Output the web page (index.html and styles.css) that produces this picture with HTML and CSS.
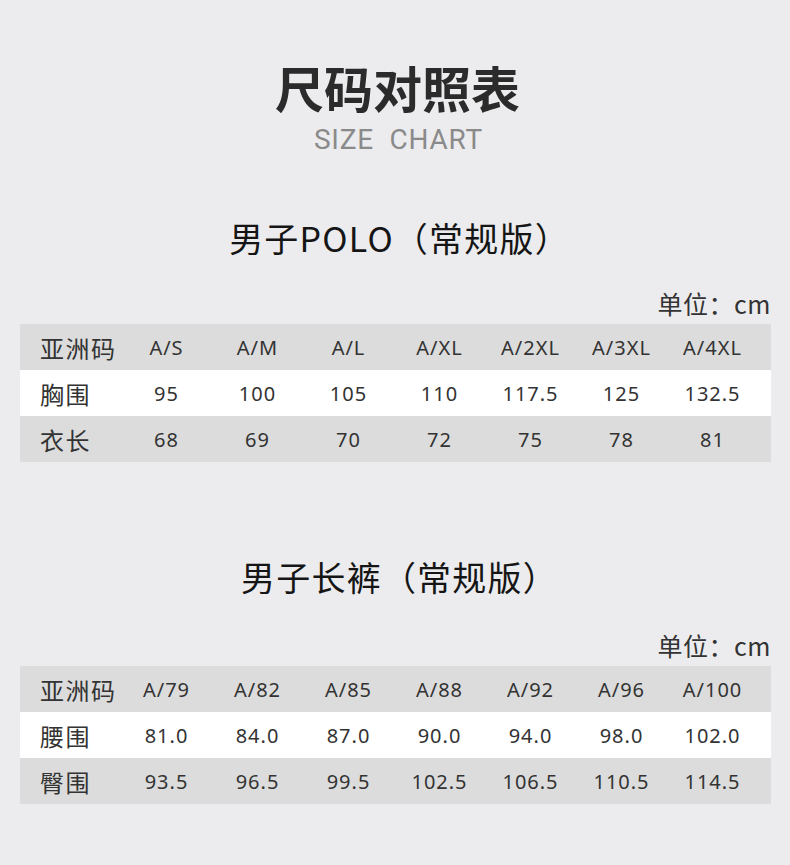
FILE: index.html
```html
<!DOCTYPE html>
<html lang="zh">
<head>
<meta charset="utf-8">
<title>尺码对照表</title>
<link rel="stylesheet" href="styles.css">
</head>
<body>
<div class="page">
  <header class="head">
    <h1 class="title">尺码对照表</h1>
    <div class="subtitle">SIZE&nbsp;&nbsp;CHART</div>
  </header>

  <section class="section first">
    <h2 class="sec-title">男子POLO（常规版）</h2>
    <div class="unit">单位：cm</div>
    <div class="table">
      <div class="row gray">
        <div class="label">亚洲码</div>
        <div class="cell">A/S</div><div class="cell">A/M</div><div class="cell">A/L</div><div class="cell">A/XL</div><div class="cell">A/2XL</div><div class="cell">A/3XL</div><div class="cell">A/4XL</div>
      </div>
      <div class="row white">
        <div class="label">胸围</div>
        <div class="cell">95</div><div class="cell">100</div><div class="cell">105</div><div class="cell">110</div><div class="cell">117.5</div><div class="cell">125</div><div class="cell">132.5</div>
      </div>
      <div class="row gray">
        <div class="label">衣长</div>
        <div class="cell">68</div><div class="cell">69</div><div class="cell">70</div><div class="cell">72</div><div class="cell">75</div><div class="cell">78</div><div class="cell">81</div>
      </div>
    </div>
  </section>

  <section class="section second">
    <h2 class="sec-title">男子长裤（常规版）</h2>
    <div class="unit">单位：cm</div>
    <div class="table">
      <div class="row gray">
        <div class="label">亚洲码</div>
        <div class="cell">A/79</div><div class="cell">A/82</div><div class="cell">A/85</div><div class="cell">A/88</div><div class="cell">A/92</div><div class="cell">A/96</div><div class="cell">A/100</div>
      </div>
      <div class="row white">
        <div class="label">腰围</div>
        <div class="cell">81.0</div><div class="cell">84.0</div><div class="cell">87.0</div><div class="cell">90.0</div><div class="cell">94.0</div><div class="cell">98.0</div><div class="cell">102.0</div>
      </div>
      <div class="row gray">
        <div class="label">臀围</div>
        <div class="cell">93.5</div><div class="cell">96.5</div><div class="cell">99.5</div><div class="cell">102.5</div><div class="cell">106.5</div><div class="cell">110.5</div><div class="cell">114.5</div>
      </div>
    </div>
  </section>
</div>
</body>
</html>
```

FILE: styles.css
```css
* { box-sizing: border-box; }
html, body {
  margin: 0;
  padding: 0;
  background: #ececee;
}
body {
  font-family: "Noto Sans", "Noto Sans CJK SC", sans-serif;
  color: #333;
  height: 865px;
  overflow: hidden;
}
.page {
  width: 790px;
  padding: 58px 19px 0 20px;
}
.head {
  text-align: center;
  padding-left: 4px;
}
.title {
  margin: 0;
  font-family: "Noto Sans CJK SC", sans-serif;
  font-weight: 700;
  font-size: 49px;
  line-height: 58px;
  color: #2b2b2b;
}
.subtitle {
  margin-top: 4px;
  font-family: Roboto, "Noto Sans", sans-serif;
  font-size: 28px;
  line-height: 40px;
  color: #8a8a8a;
  font-weight: 400;
  letter-spacing: 0.8px;
  padding-left: 2px;
}
.section.first { margin-top: 53px; }
.section.second { margin-top: 90px; }
.sec-title {
  margin: 0;
  text-align: center;
  font-family: "Noto Sans CJK SC", sans-serif;
  font-weight: 400;
  font-size: 34px;
  line-height: 50px;
  color: #151515;
  padding-left: 8px;
  letter-spacing: 1.2px;
}
.second .unit { margin-top: 25px; }
.unit {
  margin-top: 22px;
  text-align: right;
  font-family: "Noto Sans CJK SC", sans-serif;
  font-size: 25px;
  line-height: 36px;
  color: #333;
  margin-bottom: 3px;
  letter-spacing: 0.5px;
}
.table {
  display: flex;
  flex-direction: column;
}
.row {
  display: flex;
  align-items: center;
  height: 46px;
  padding: 0 13px 0 20px;
}
.row.gray { background: #dcdcdc; }
.row.white { background: #ffffff; }
.label {
  width: 81px;
  flex: none;
  font-family: "Noto Sans CJK SC", sans-serif;
  font-size: 24px;
  letter-spacing: 1.5px;
  color: #333;
  white-space: nowrap;
}
.cell {
  width: 91px;
  flex: none;
  text-align: center;
  font-family: "Noto Sans", sans-serif;
  font-size: 20px;
  letter-spacing: 1px;
  color: #333;
}
```
